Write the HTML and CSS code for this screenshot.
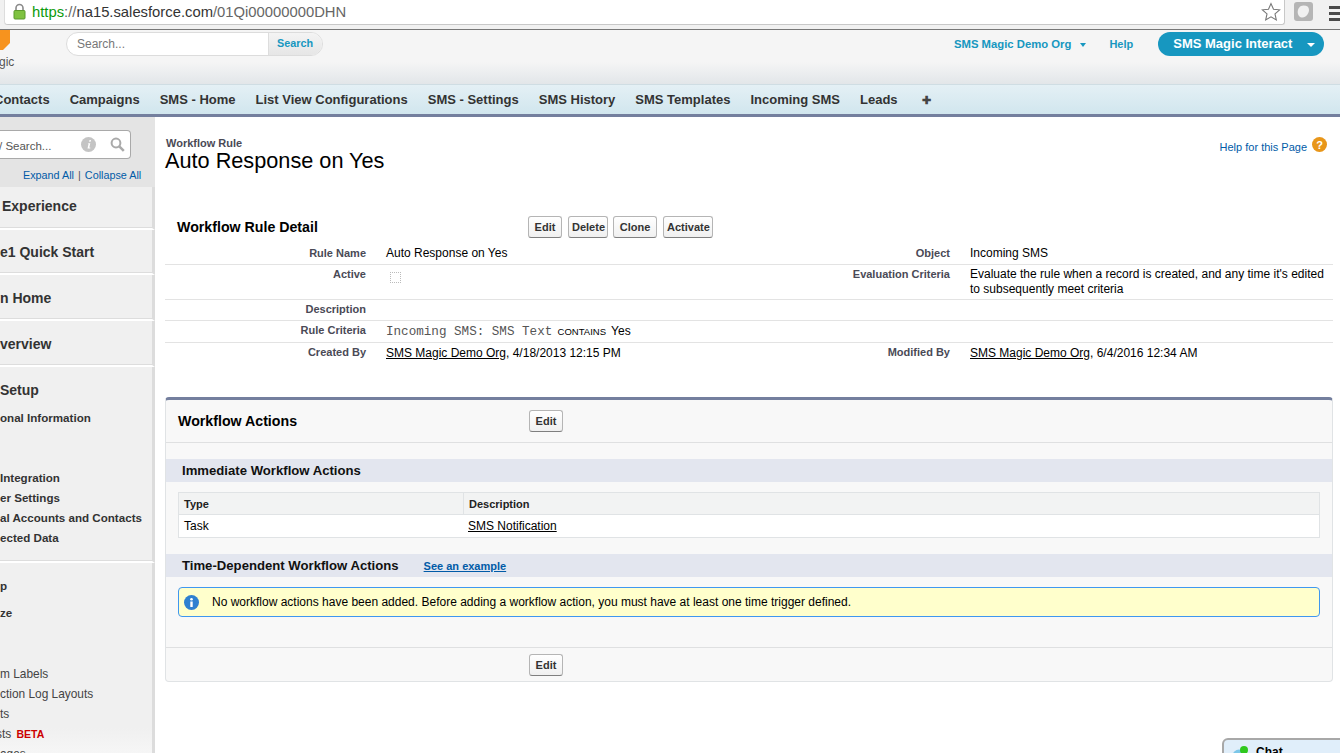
FILE: index.html
```html
<!DOCTYPE html>
<html lang="en">
<head>
<meta charset="utf-8">
<title>Auto Response on Yes</title>
<link rel="stylesheet" href="styles.css">
</head>
<body>
<div class="browser">
  <div class="address">
    <svg class="lock" width="13" height="17" viewBox="0 0 13 17"><path d="M3 8V5a3.5 3.5 0 0 1 7 0v3" fill="none" stroke="#8a8a8a" stroke-width="1.6"/><rect x="1" y="7.5" width="11" height="8.5" rx="1" fill="#7fc241" stroke="#5b9a2c"/></svg>
    <span class="url"><span class="https">https</span><span class="dim">://</span>na15.salesforce.com<span class="dim">/01Qi00000000DHN</span></span>
    <svg class="star" width="20" height="20" viewBox="0 0 20 20"><path d="M10 1.6l2.5 5.6 6.1.6-4.6 4.1 1.3 6-5.3-3.1-5.3 3.1 1.3-6L1.4 7.8l6.1-.6z" fill="#fff" stroke="#777" stroke-width="1.1"/></svg>
  </div>
  <div class="ext">
    <svg width="19" height="19" viewBox="0 0 19 19"><rect width="19" height="19" rx="3" fill="#b5b5b5"/><path d="M9.5 3.5c3.6 0 5.5 1.5 5.5 4.2 0 3.700-3 7.800-6.500 7.800-2.800 0-4.800-2.300-4.800-5.300 0-3.800 2.300-6.700 5.800-6.700z" fill="#f1f1f1"/></svg>
  </div>
  <div class="burger"><i></i><i></i><i></i></div>
</div>

<header class="top">
  <div class="logo">
    <svg class="hex" width="10" height="20" viewBox="0 0 10 20"><path d="M0 0h10v13l-7 7H0z" fill="#f7931e"/></svg>
    <span class="logo-text">gic</span>
  </div>
  <div class="search">
    <span class="search-input">Search...</span>
    <span class="search-btn">Search</span>
  </div>
  <a class="org">SMS Magic Demo Org<i class="caret"></i></a>
  <a class="help">Help</a>
  <div class="app">SMS Magic Interact<i class="caret white"></i></div>
</header>

<nav class="tabs">
  <a>Contacts</a><a>Campaigns</a><a>SMS - Home</a><a>List View Configurations</a><a>SMS - Settings</a><a>SMS History</a><a>SMS Templates</a><a>Incoming SMS</a><a>Leads</a><a class="plus">✚</a>
</nav>

<div class="content">
  <aside class="side">
    <div class="side-top">
      <div class="quick">
        <span class="quick-text">/ Search...</span>
        <svg class="quick-i" width="15" height="15" viewBox="0 0 15 15"><circle cx="7.500" cy="7.500" r="7.500" fill="#c4c4c4"/><path d="M8.500 3h1.500l-.4 1.700H8.100zM7.600 6.200h1.700l-1 4.300h1v.9H6.500l1-4.300h-.8z" fill="#fff"/></svg>
        <svg class="quick-s" width="15" height="15" viewBox="0 0 15 15"><circle cx="6" cy="6" r="4.400" fill="none" stroke="#aaa" stroke-width="2"/><path d="M9.300 9.300l4.500 4.500" stroke="#aaa" stroke-width="2.600"/></svg>
      </div>
      <div class="expand"><a>Expand All</a><span class="bar">|</span><a>Collapse All</a></div>
    </div>
    <div class="group g41"><h3 class="shift">Experience</h3></div>
    <div class="group g44"><h3>e1 Quick Start</h3></div>
    <div class="group g45"><h3>n Home</h3></div>
    <div class="group g45"><h3>verview</h3></div>
    <div class="group g194">
      <h3>Setup</h3>
      <p class="item first">onal Information</p>
      <p class="item gap">Integration</p>
      <p class="item">er Settings</p>
      <p class="item">al Accounts and Contacts</p>
      <p class="item">ected Data</p>
    </div>
    <div class="group last">
      <p class="item lead">p</p>
      <p class="item lead2">ze</p>
      <p class="plain top-gap">m Labels</p>
      <p class="plain">ction Log Layouts</p>
      <p class="plain">ts</p>
      <p class="plain clip">sts <b class="beta">BETA</b></p>
      <p class="plain">ages</p>
    </div>
  </aside>

  <main class="main">
    <div class="page-head">
      <div>
        <div class="crumb">Workflow Rule</div>
        <h1>Auto Response on Yes</h1>
      </div>
      <a class="page-help"><span>Help for this Page</span><svg width="15" height="15" viewBox="0 0 15 15"><circle cx="7.500" cy="7.500" r="7.500" fill="#e8961a"/><text x="7.500" y="11.500" class="q">?</text></svg></a>
    </div>

    <section class="detail">
      <div class="bar-row">
        <h2>Workflow Rule Detail</h2>
        <div class="btns"><button>Edit</button><button>Delete</button><button>Clone</button><button>Activate</button></div>
      </div>
      <div class="row h22 first-row"><span class="lab">Rule Name</span><span class="val">Auto Response on Yes</span><span class="lab lab2">Object</span><span class="val val2">Incoming SMS</span></div>
      <div class="row h35"><span class="lab">Active</span><span class="val"><i class="check"></i></span><span class="lab lab2">Evaluation Criteria</span><span class="val val2">Evaluate the rule when a record is created, and any time it's edited to subsequently meet criteria</span></div>
      <div class="row h21"><span class="lab">Description</span><span class="val"></span></div>
      <div class="row h22 low"><span class="lab">Rule Criteria</span><span class="val"><span class="mono">Incoming SMS: SMS Text</span> <span class="op">CONTAINS</span> Yes</span></div>
      <div class="row h22 noline low"><span class="lab">Created By</span><span class="val"><a class="link">SMS Magic Demo Org</a>, 4/18/2013 12:15 PM</span><span class="lab lab2">Modified By</span><span class="val val2"><a class="link">SMS Magic Demo Org</a>, 6/4/2016 12:34 AM</span></div>
    </section>

    <section class="panel">
      <div class="panel-head">
        <h2>Workflow Actions</h2>
        <button>Edit</button>
      </div>
      <h3 class="sub">Immediate Workflow Actions</h3>
      <div class="table">
        <div class="tr th"><span class="c1">Type</span><span class="c2">Description</span></div>
        <div class="tr"><span class="c1">Task</span><span class="c2"><a class="link">SMS Notification</a></span></div>
      </div>
      <h3 class="sub sub2">Time-Dependent Workflow Actions<a class="example">See an example</a></h3>
      <div class="msg">
        <svg width="15" height="15" viewBox="0 0 15 15"><circle cx="7.500" cy="7.500" r="7.500" fill="#2f80d0"/><rect x="6.300" y="6.500" width="2.400" height="5.500" fill="#fff"/><circle cx="7.500" cy="4.200" r="1.300" fill="#fff"/></svg>
        <span>No workflow actions have been added. Before adding a workflow action, you must have at least one time trigger defined.</span>
      </div>
      <div class="panel-foot"><button>Edit</button></div>
    </section>
  </main>
</div>

<div class="chat"><svg width="18" height="16" viewBox="0 0 18 16"><circle cx="7" cy="11" r="6.500" fill="#7cc7e8"/><circle cx="12" cy="5" r="4" fill="#2fc81e"/></svg><span>Chat</span></div>
</body>
</html>
```

FILE: styles.css
```css
* { box-sizing: border-box; }
html, body { margin: 0; height: 100%; overflow: hidden; }
body { font-family: "Liberation Sans", Arial, sans-serif; font-size: 12px; color: #000; background: #fff; display: flex; flex-direction: column; position: relative; }
h1, h2, h3, p { margin: 0; }
a { text-decoration: none; }

.browser { height: 30px; flex: none; display: flex; align-items: flex-start; background: #f1f1f1; border-bottom: 1px solid #777; }
.address { width: 1285px; height: 25px; background: #fff; border: 1px solid #c8c8c8; border-top: 0; border-left-width: 0; border-radius: 0 0 3px 3px; margin-left: 5px; display: flex; align-items: center; padding-left: 8px; box-shadow: -1px 0 0 #ddd; }
.lock { flex: none; margin-top: -1px; }
.url { font-size: 14.800px; color: #333; margin-left: 6px; margin-top: -1px; white-space: nowrap; }
.https { color: #0a9a0a; }
.dim { color: #666; }
.star { margin-left: auto; margin-right: 3px; }
.ext { margin: 2px 0 0 9px; height: 19px; }
.burger { margin: 6px 0 0 16px; display: flex; flex-direction: column; gap: 3px; width: 11px; flex: none; }
.burger i { display: block; height: 3px; background: #4a4a4a; }

.top { height: 54px; flex: none; display: flex; align-items: flex-start; background: linear-gradient(#f5f5f5 0, #f5f5f5 32px, #e2e6e9 54px); position: relative; }
.logo { width: 66px; height: 54px; flex: none; position: relative; }
.hex { display: block; }
.logo-text { position: absolute; left: -1px; top: 25px; font-size: 12px; color: #555; }
.search { margin-top: 2px; width: 257px; height: 24px; border: 1px solid #dcdcdc; border-radius: 12px; display: flex; overflow: hidden; background: #fff; }
.search-input { width: 201px; padding-left: 10px; font-size: 12px; line-height: 22px; color: #777; }
.search-btn { flex: 1; background: linear-gradient(#f4f4f4, #e6e6e6); border-left: 1px solid #ddd; color: #1797c0; font-weight: bold; font-size: 10.800px; line-height: 20px; padding-left: 8px; }
.org { margin: 8px 0 0 631px; color: #1797c0; font-weight: bold; font-size: 11.300px; white-space: nowrap; line-height: 13px; display: flex; align-items: center; }
.caret { display: inline-block; width: 0; height: 0; border: 3.500px solid transparent; border-top: 4px solid #1797c0; border-bottom: 0; margin-left: 9px; }
.help { margin: 8px 0 0 23px; color: #1797c0; font-weight: bold; font-size: 11px; line-height: 13px; }
.app { margin: 2px 0 0 25px; width: 166px; height: 24px; border-radius: 12px; background: #1797c0; color: #fff; font-weight: bold; font-size: 13px; line-height: 20px; padding: 0 0 1px 15px; white-space: nowrap; display: flex; align-items: center; }
.caret.white { border-top-color: #fff; margin: 2px 0 0 15px; border-left-width: 4px; border-right-width: 4px; }

.tabs { height: 33px; flex: none; display: flex; gap: 20px; align-items: flex-start; background: linear-gradient(#e4f0f5, #d1e6ee); border-top: 1px solid #cfdde3; border-bottom: 3px solid #747f9e; padding: 7px 0 0 0; overflow: hidden; white-space: nowrap; font-weight: bold; font-size: 13px; line-height: 16px; color: #333; }
.tabs a:first-child { margin-left: -6px; }
.plus { font-size: 11px; color: #444; margin-left: 4px; }

.content { flex: 1; min-height: 0; display: flex; }
.side { width: 155px; flex: none; background: #e4e4e4; overflow: hidden; }
.side-top { height: 70px; padding-top: 13px; position: relative; }
.quick { width: 131px; height: 29px; background: #fff; border: 1px solid #a9a9a9; border-left: 0; border-radius: 0 4px 4px 0; display: flex; align-items: center; }
.quick-text { font-size: 11.500px; color: #555; white-space: nowrap; margin: 2px 0 0 -1px; }
.quick-i { margin-left: 30px; flex: none; }
.quick-s { margin-left: 14px; flex: none; }
.expand { margin: 10px 0 0 23px; font-size: 10.800px; line-height: 13px; white-space: nowrap; color: #015ba7; }
.bar { margin: 0 4px; color: #555; }
.group { background: #f0f0f0; border-right: 3px solid #dcdcdc; border-bottom: 2px solid #fff; overflow: hidden; box-shadow: inset 0 -1px 0 #ddd; }
.group h3 { font-size: 14px; line-height: 18px; color: #333; padding-top: 14px; white-space: nowrap; }
.group.g41 h3 { padding-top: 10px; }
.group.g44 h3 { padding-top: 13px; }
.group h3.shift { padding-left: 2px; }
.g41 { height: 43px; }
.g44 { height: 45px; }
.g45 { height: 46px; }
.g194 { height: 196px; }
.last { height: 200px; border-bottom: 0; box-shadow: none; background: linear-gradient(#f0f0f0 165px, #f8f8f8); }
.item { font-weight: bold; font-size: 11.600px; line-height: 20px; color: #333; white-space: nowrap; }
.first { margin-top: 9px; }
.gap { margin-top: 40px; }
.lead { margin-top: 13px; }
.lead2 { margin-top: 7px; }
.plain { font-size: 11.900px; line-height: 20px; color: #444; white-space: nowrap; }
.clip { margin-left: -4px; }
.top-gap { margin-top: 41px; }
.beta { color: #c00; font-size: 10.500px; margin-left: 2px; }

.main { flex: 1; min-width: 0; padding: 0 7px 0 10px; }
.page-head { height: 99px; padding-top: 19px; display: flex; justify-content: space-between; align-items: flex-start; }
.crumb { font-weight: bold; font-size: 11px; line-height: 14px; color: #4a4a56; margin-left: 1px; }
h1 { font-weight: normal; font-size: 21.700px; line-height: 22px; white-space: nowrap; }
.page-help { display: flex; align-items: flex-start; gap: 5px; font-size: 11px; color: #015ba7; margin: 1px 6px 0 0; line-height: 15px; }
.page-help span { margin-top: 3px; }
.page-help svg { display: block; }
.q { font: bold 11px "Liberation Sans", Arial, sans-serif; fill: #fff; text-anchor: middle; }

.detail { height: 181px; }
.bar-row { height: 27px; display: flex; align-items: flex-start; }
h2 { font-size: 14.200px; line-height: 22px; font-weight: bold; white-space: nowrap; }
.bar-row h2 { width: 363px; padding-left: 12px; flex: none; }
.btns { display: flex; gap: 5px; }
button { font: bold 11px "Liberation Sans", Arial, sans-serif; color: #333; height: 22px; padding: 0 3px; min-width: 34px; border: 1px solid #b5b5b5; border-bottom-color: #7f7f7f; border-radius: 3px; background: linear-gradient(#fff, #f0f0f0); }
.btns button:nth-child(2) { width: 40px; margin-left: 1px; }
.btns button:nth-child(3) { width: 44px; }
.btns button:nth-child(4) { width: 50px; margin-left: 1px; }
.row { display: flex; border-bottom: 1px solid #e3e3e3; align-items: flex-start; padding-top: 2px; }
.first-row { padding-top: 3px; }
.h21 { height: 21px; }
.h35 { height: 35px; }
.h22 { height: 22px; }
.noline { border-bottom: 0; }
.lab { width: 201px; flex: none; text-align: right; font-weight: bold; font-size: 11px; line-height: 14px; color: #4a4a56; }
.val { width: 364px; flex: none; margin-left: 20px; line-height: 14.500px; font-size: 12px; }
.low .val { margin-top: 1px; }
.lab2 { width: 200px; }
.val2 { width: 358px; }
.check { display: block; width: 11px; height: 11px; border: 1px dotted #bbb; margin: 5px 0 0 4px; background: #fff; }
.mono { font-family: "Liberation Mono", monospace; font-size: 12.600px; color: #555; margin-right: 2px; }
.op { font-size: 9.500px; margin-right: 2px; }
.link { color: #000; text-decoration: underline; }

.panel { height: 285px; background: #f8f8f8; border: 1px solid #e0e3e5; border-top: 3px solid #747f9e; border-radius: 4px; }
.panel-head { height: 43px; display: flex; align-items: flex-start; padding-top: 10px; border-bottom: 1px solid #dfe0e1; }
.panel-head h2 { width: 363px; padding-left: 12px; flex: none; }
.sub { background: #e3e6ef; height: 23px; margin-top: 16px; font-size: 13.150px; line-height: 23px; padding-left: 16px; white-space: nowrap; color: #111; }
.table { margin: 10px 12px 0; border: 1px solid #e0e3e5; background: #fff; }
.tr { height: 22px; display: flex; align-items: center; font-size: 12px; }
.th { background: #f2f3f3; border-bottom: 1px solid #e0e3e5; font-weight: bold; font-size: 11px; color: #222; }
.c1, .c2 { height: 100%; line-height: 22px; padding-left: 5px; }
.c1 { width: 285px; flex: none; }
.th .c1 { border-right: 1px solid #e0e3e5; }
.tr:not(.th) .c2 { padding-left: 4px; }
.sub2 { margin-top: 16px; }
.example { font-size: 11px; color: #015ba7; text-decoration: underline; margin-left: 25px; }
.msg { margin: 10px 12px 0; height: 30px; border: 1px solid #3f97f0; border-radius: 4px; background: #ffffcc; display: flex; align-items: center; gap: 13px; padding-left: 5px; font-size: 12px; }
.panel-foot { margin-top: 30px; height: 35px; border-top: 1px solid #dfe0e1; padding: 6px 0 0 363px; }

.chat { position: absolute; left: 1222px; top: 738px; width: 130px; height: 40px; background: #e0eefa; border: 2px solid #a8a8a8; border-radius: 6px 6px 0 0; display: flex; align-items: flex-start; padding: 5px 0 0 8px; gap: 6px; font-weight: bold; font-size: 12px; }
```
